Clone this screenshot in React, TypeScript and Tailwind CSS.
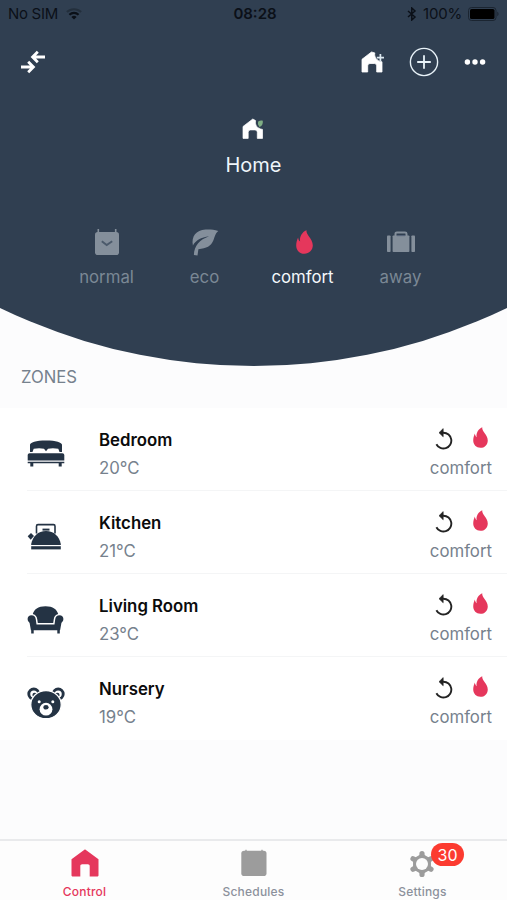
import type { ReactNode } from "react";
import { clsx } from "clsx";

interface IconProps {
  className?: string;
}

/* ---------- Icons ---------- */

function WifiIcon() {
  return (
    <svg width="16" height="12" viewBox="0 0 16 12" fill="none" stroke="#0b1018" strokeWidth="2.1">
      <path d="M0.9 4.1a10.2 10.2 0 0 1 14.2 0" opacity="0.35" />
      <path d="M3.4 6.7a6.6 6.6 0 0 1 9.2 0" />
      <path d="M8 11.6 5.4 9a3.8 3.8 0 0 1 5.2 0Z" fill="#0b1018" stroke="none" />
    </svg>
  );
}

function BluetoothIcon() {
  return (
    <svg width="10" height="14" viewBox="0 0 10 14" fill="none" stroke="#0b1018" strokeWidth="1.5">
      <path d="M1 4l7 6-3.2 3V1L8 4l-7 6" />
    </svg>
  );
}

function BatteryIcon() {
  return (
    <svg width="32" height="14" viewBox="0 0 32 14">
      <rect x="0.5" y="0.5" width="27.5" height="13" rx="3" fill="none" stroke="#1b2531" />
      <rect x="2" y="2" width="24.5" height="10" rx="1.6" fill="#000" />
      <path d="M29.3 4.8c1.6.6 1.6 3.8 0 4.4Z" fill="#1b2531" />
    </svg>
  );
}

function SwapIcon() {
  return (
    <svg width="26" height="24" viewBox="0 0 26 24" fill="none" stroke="#fff" strokeWidth="2.8">
      <path d="M25 7H13M17.800 1.800 12.600 7l5.200 5.200" />
      <path d="M1 17h12M8.200 11.800l5.200 5.200-5.200 5.200" />
    </svg>
  );
}

function HousePlusIcon() {
  return (
    <svg width="24" height="22" viewBox="0 0 24 22">
      <path
        d="M1 8.300 10.500 1 13.800 1.900C13 5.800 15.500 10 21 10.800V21h-5.300v-6.200a2.300 2.300 0 0 0-2.300-2.300H9a2.300 2.300 0 0 0-2.300 2.300V21H1Z"
        fill="#fff"
        stroke="#fff"
        strokeWidth="0.8"
        strokeLinejoin="round"
      />
      <path d="M19.400 3v7.200M15.800 6.600H23" stroke="#dce8f0" strokeWidth="1.700" />
    </svg>
  );
}

function PlusCircleIcon() {
  return (
    <svg width="30" height="30" viewBox="0 0 30 30" fill="none" stroke="#e8f2f8">
      <circle cx="15" cy="15" r="13.600" strokeWidth="1.400" />
      <path d="M15 8.200v13.600M8.200 15h13.600" strokeWidth="1.800" />
    </svg>
  );
}

function DotsIcon() {
  return (
    <svg width="22" height="6" viewBox="0 0 22 6" fill="#fff">
      <circle cx="3.400" cy="3" r="2.700" />
      <circle cx="11" cy="3" r="2.700" />
      <circle cx="18.600" cy="3" r="2.700" />
    </svg>
  );
}

function EcoHouseIcon() {
  return (
    <svg width="22" height="22" viewBox="0 0 22 22">
      <path
        d="M1 8.500 10.800 1l2.800 1.600C12.800 7 15 10.600 20.500 11.400V20.400h-5.200v-6.200a2.300 2.300 0 0 0-2.300-2.300H8.500a2.300 2.300 0 0 0-2.300 2.300v6.200H1Z"
        fill="#fff"
        stroke="#fff"
        strokeWidth="0.700"
        strokeLinejoin="round"
      />
      <path d="M16.400 3.200c1.400-.8 3.200-.9 4.400-.4.3 2.800-.7 5-2.500 5.700l-.6 1.200-.6-1.600c-1.200-1-1.500-3.200-.7-4.900Z" fill="#7fae84" />
    </svg>
  );
}

function CheckCalendarIcon() {
  return (
    <svg width="26" height="28" viewBox="0 0 26 28">
      <path d="M4.300 1v5M21.700 1v5" stroke="#848f9b" strokeWidth="1.600" />
      <rect x="1" y="4" width="24" height="23" rx="2.800" fill="#848f9b" />
      <path d="M7.800 13.200l4.900 3.900 5.500-3.900" fill="none" stroke="#4b5a6b" strokeWidth="1.900" />
    </svg>
  );
}

function LeafIcon() {
  return (
    <svg width="28" height="28" viewBox="0 0 28 28" fill="#848f9b">
      <path d="M1.900 17.500C.2 8.500 5 2.200 14.500 1.600c4.500-.3 8.300.2 12.800 1.300-3.200 2.500-3.500 6-5.100 9.900C20 18 15.600 20.600 7.400 21.200l-.9 6.300-3.600-.4c.2-9 5.600-15.400 15.200-18.800C10 9.500 4.900 12.300 1.900 17.500Z" />
    </svg>
  );
}

function FlameIcon({ className }: IconProps) {
  return (
    <svg viewBox="0 0 17 24" className={className} fill="#e5375c">
      <path d="M10.500.2c-.8 4.600 6.300 8.300 6.300 15.100 0 4.900-3.600 8.500-8.400 8.500S.2 20.200.2 15.500c0-2.900.7-5.400 1.900-8 .2 1.800.8 3.300 2 4.100C3.300 6.800 6 2 10.500.2Z" />
    </svg>
  );
}

function SuitcaseIcon() {
  return (
    <svg width="28" height="22" viewBox="0 0 28 22" fill="#848f9b">
      <rect x="0" y="4.500" width="3.600" height="16.500" rx="0.800" />
      <rect x="24.400" y="4.500" width="3.600" height="16.500" rx="0.800" />
      <rect x="5.600" y="4.500" width="16.800" height="16.500" rx="0.800" />
      <path d="M8.500 5V2.800c0-.8.6-1.400 1.400-1.400h8.200c.8 0 1.400.6 1.400 1.400V5" fill="none" stroke="#848f9b" strokeWidth="2" />
      <path d="M9.800 4.600h8.400" stroke="#56647a" strokeWidth="1.100" />
    </svg>
  );
}

function BedIcon() {
  return (
    <svg width="38" height="32" viewBox="0 0 38 32" fill="#243344">
      <path d="M3 14V6.800C3 4.600 9 2.500 19 2.500s16 2.100 16 4.300V14h-2.500l-1.200-3.200c-3.600-.9-7.300-.9-10.300 0L19 13.200l-2-2.400c-3-.9-6.700-.9-10.300 0L5.500 14Z" />
      <path d="M.7 17.500c0-1.600.8-2.300 2-2.300h32.600c1.200 0 2 .7 2 2.300v4.900H.7Z" />
      <path d="M.7 23.700h36.600v1.600H.7ZM3.300 25h3v3.500h-3ZM31.700 25h3v3.500h-3Z" />
    </svg>
  );
}

function KettleIcon() {
  return (
    <svg width="38" height="32" viewBox="0 0 38 32" fill="#243344">
      <path d="M9.500 12.500V5.200c0-1 .6-1.600 1.500-1.600h15.500c.9 0 1.500.6 1.500 1.600v7.300" fill="none" stroke="#243344" strokeWidth="1.600" />
      <path d="M15.500 8.600h7" stroke="#243344" strokeWidth="2" />
      <path d="M.7 15.300 4 12l3 3-3.300 3.700Z" />
      <path d="M4.200 24v-1C5.700 15.400 11 10 19 10s13.300 5.400 14.800 13v1Z" />
      <path d="M4.200 25.200h29.600v3.200H4.200Z" />
    </svg>
  );
}

function ArmchairIcon() {
  return (
    <svg width="38" height="32" viewBox="0 0 38 32" fill="#243344">
      <path d="M5.800 10.100C7 5.300 11 2.200 18.500 2.200S30 5.300 31.200 10.100c-2.800.6-4.200 2.800-4.500 5.500l-.5 3.400H10.800l-.5-3.400c-.3-2.700-1.700-4.900-4.500-5.500Z" />
      <path d="M4.500 11.300c2.400 0 4 1.400 4.300 4.200l.7 5.100h18l.7-5.100c.3-2.800 1.900-4.200 4.300-4.200 2.300 0 3.900 1.500 3.900 3.600 0 2.300-1.500 2.700-2 4.200l-1.300 7.100h-.3v3.200h-2.500v-3.200H6.700v3.200H4.200v-3.200h-.3L2.600 19.100c-.5-1.500-2-1.900-2-4.200 0-2.100 1.600-3.600 3.900-3.600Z" />
    </svg>
  );
}

function BearIcon() {
  return (
    <svg width="38" height="32" viewBox="0 0 38 32">
      <g fill="#fff" stroke="#243344" strokeWidth="2.900">
        <circle cx="6.800" cy="7" r="5" />
        <circle cx="31.200" cy="7" r="5" />
      </g>
      <circle cx="7.700" cy="8" r="2.300" fill="#243344" />
      <circle cx="30.300" cy="8" r="2.300" fill="#243344" />
      <ellipse cx="19" cy="17.700" rx="15.200" ry="14" fill="#243344" stroke="#fff" strokeWidth="1.200" />
      <circle cx="12.200" cy="14.700" r="1.500" fill="#fff" />
      <circle cx="25.800" cy="14.700" r="1.500" fill="#fff" />
      <circle cx="19" cy="22.200" r="6.400" fill="#fff" />
      <ellipse cx="19" cy="20.300" rx="2.600" ry="2.300" fill="#243344" />
    </svg>
  );
}

function UndoIcon() {
  return (
    <svg width="18" height="22" viewBox="0 0 18 22" fill="none" stroke="#232323" className="mb-0.5">
      <path d="M6.600 4.700h1.800a7.900 7.900 0 1 1-7 11.500" strokeWidth="1.900" />
      <path d="M8.200 .600 4 4.700l4.200 4.100Z" fill="#232323" strokeWidth="0.600" />
    </svg>
  );
}

function HouseIcon() {
  return (
    <svg width="28" height="28" viewBox="0 0 28 28" fill="#e5375c">
      <path d="M.5 10.300 13.400.8c.4-.3.8-.3 1.200 0l12.900 9.500v16.300c0 .5-.3.800-.8.800h-8V17.200c0-1.200-.7-1.900-1.900-1.900h-5.600c-1.200 0-1.900.7-1.900 1.900v10.200h-8c-.5 0-.8-.3-.8-.8Z" />
    </svg>
  );
}

function CalendarIcon() {
  return (
    <svg width="28" height="28" viewBox="0 0 28 28" fill="#9c9c9c">
      <path d="M4.500 3 6 .3 7.500 3ZM20.500 3 22 .3 23.500 3Z" />
      <rect x="1.300" y="1.800" width="25.200" height="25.200" rx="2.800" />
    </svg>
  );
}

function GearIcon() {
  return (
    <svg width="28" height="28" viewBox="0 0 28 28">
      <g stroke="#9c9c9c" strokeWidth="5.200" strokeLinecap="round">
        <path d="M14 3.600v20.800M5 8.800l18 10.400M23 8.800 5 19.200" />
      </g>
      <path
        d="M14 4.500l8.200 4.700v9.600L14 23.500l-8.200-4.700V9.200Z"
        fill="#9c9c9c"
        stroke="#9c9c9c"
        strokeWidth="1.500"
        strokeLinejoin="round"
      />
      <circle cx="14" cy="14" r="6" fill="#fdfdfd" />
    </svg>
  );
}

/* ---------- Data ---------- */

const MODES = [
  { name: "normal", icon: <CheckCalendarIcon />, active: false },
  { name: "eco", icon: <LeafIcon />, active: false },
  { name: "comfort", icon: <FlameIcon className="ml-[3px] h-6 w-[17px]" />, active: true },
  { name: "away", icon: <SuitcaseIcon />, active: false },
];

const ZONES = [
  { name: "Bedroom", temp: "20°C", icon: <BedIcon /> },
  { name: "Kitchen", temp: "21°C", icon: <KettleIcon /> },
  { name: "Living Room", temp: "23°C", icon: <ArmchairIcon /> },
  { name: "Nursery", temp: "19°C", icon: <BearIcon /> },
];

/* ---------- Sections ---------- */

function StatusBar() {
  return (
    <div className="grid h-7 grid-cols-3 items-center pl-2 pr-[7px] text-[15px] text-[#0b1018]">
      <div className="flex items-center gap-2 tracking-[-0.3px]">
        <span>No SIM</span>
        <WifiIcon />
      </div>
      <span className="pl-0.5 text-center font-semibold">08:28</span>
      <div className="flex items-center justify-end gap-1.5">
        <BluetoothIcon />
        <span className="tracking-[-0.2px]">100%</span>
        <BatteryIcon />
      </div>
    </div>
  );
}

function Header() {
  return (
    // The bottom edge is an arc of a large circle centred above the screen
    <header className="h-[366px] shrink-0 bg-[#303f51] [clip-path:circle(583px_at_50%_-217px)]">
      <StatusBar />

      <div className="flex h-17 items-center justify-between pl-5 pr-[21px]">
        <SwapIcon />
        <div className="flex items-center">
          <HousePlusIcon />
          <div className="ml-6">
            <PlusCircleIcon />
          </div>
          <div className="ml-[25px]">
            <DotsIcon />
          </div>
        </div>
      </div>

      <div className="mt-[22px] flex flex-col items-center">
        <div className="pr-[2px]">
          <EcoHouseIcon />
        </div>
        <h1 className="mt-[11px] text-[20px] leading-[28px] text-[#eef5fa]">Home</h1>
      </div>

      <div className="mx-auto mt-12 grid w-[392px] grid-cols-4">
        {MODES.map((mode) => (
          <div key={mode.name} className="flex flex-col items-center">
            <div className="flex h-[30px] items-center">{mode.icon}</div>
            <span
              className={clsx(
                "mt-2 text-[16.800px] leading-6",
                mode.active ? "text-[#f4f8fb]" : "text-[#7b8895]",
              )}
            >
              {mode.name}
            </span>
          </div>
        ))}
      </div>
    </header>
  );
}

interface ZoneRowProps {
  name: string;
  temp: string;
  icon: ReactNode;
}

function ZoneRow({ name, temp, icon }: ZoneRowProps) {
  return (
    <li className="group h-[83px] pl-[27px]">
      <div className="flex h-full items-center border-b border-[#f4f5f6] pr-[15px] pt-[9px] group-last:border-transparent">
        <div className="w-[72px] shrink-0">{icon}</div>
        <div className="flex-1">
          <p className="text-[16.800px] font-semibold leading-7 text-[#0b0b0c]">{name}</p>
          <p className="text-[16.800px] leading-7 text-[#76818d]">{temp}</p>
        </div>
        <div className="flex flex-col items-end">
          <div className="flex h-7 items-center gap-5 pr-1">
            <UndoIcon />
            <FlameIcon className="mb-1 h-[21px] w-[15px]" />
          </div>
          <p className="text-[16.800px] leading-7 text-[#76818d]">comfort</p>
        </div>
      </div>
    </li>
  );
}

function TabBar() {
  return (
    <nav className="mt-auto grid h-[61px] shrink-0 grid-cols-3 border-t-2 border-[#e9eaec] bg-[#fdfdfd] text-[12px] font-medium leading-4 tracking-[0.2px] text-[#8c919c]">
      <div className="flex flex-col items-center pt-2">
        <HouseIcon />
        <span className="mt-[7px] text-[#e5375c]">Control</span>
      </div>
      <div className="flex flex-col items-center pt-2">
        <CalendarIcon />
        <span className="mt-[7px]">Schedules</span>
      </div>
      <div className="flex flex-col items-center pt-[9px]">
        <div className="relative mr-px">
          <GearIcon />
          <span className="absolute -top-[7px] left-[23px] flex h-[23px] w-[33px] items-center justify-center rounded-full bg-[#fc3b30] text-[16px] font-normal tracking-normal text-white">
            30
          </span>
        </div>
        <span className="mt-[6px]">Settings</span>
      </div>
    </nav>
  );
}

export default function App() {
  return (
    <div className="flex h-[900px] w-full flex-col overflow-hidden bg-[#fcfcfd] font-['Inter',sans-serif]">
      <Header />
      <h2 className="h-[42px] shrink-0 pl-[21px] text-[16.700px] leading-[22px] text-[#76818d]">ZONES</h2>
      <ul className="bg-white">
        {ZONES.map((zone) => (
          <ZoneRow key={zone.name} {...zone} />
        ))}
      </ul>
      <TabBar />
    </div>
  );
}
